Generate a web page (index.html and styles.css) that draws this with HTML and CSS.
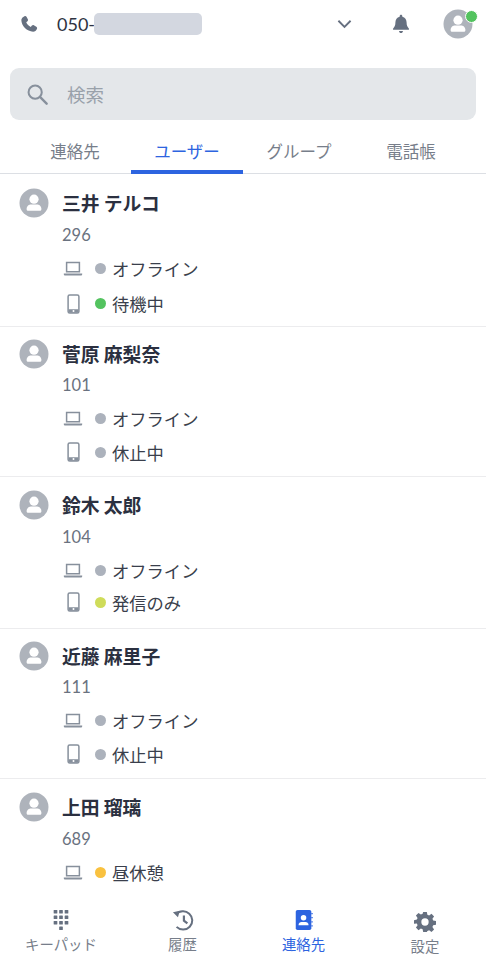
FILE: index.html
```html
<!DOCTYPE html>
<html lang="ja">
<head>
<meta charset="utf-8">
<title>連絡先</title>
<link rel="stylesheet" href="styles.css">
</head>
<body>
<svg class="defs" width="0" height="0" aria-hidden="true">
  <symbol id="avatar" viewBox="0 0 30 30">
    <circle cx="15" cy="15" r="14.5" fill="#aeb3bb"/>
    <circle cx="15" cy="11.2" r="4.6" fill="#fff"/>
    <path d="M7.6 21.2c0-3.2 2.6-4.6 4.4-4.6h6c1.8 0 4.4 1.4 4.4 4.6 0 1-.8 1.6-1.6 1.6H9.2c-.8 0-1.6-.6-1.6-1.6z" fill="#fff"/>
  </symbol>
  <symbol id="laptop" viewBox="0 0 20 16">
    <path d="M3.6 1.6h12.8v9.2H3.6z" fill="none" stroke="#87909c" stroke-width="1.5"/>
    <path d="M.8 12.4h18.4v.8c0 .9-.6 1.4-1.4 1.4H2.2c-.8 0-1.4-.5-1.4-1.4z" fill="#87909c"/>
  </symbol>
  <symbol id="phone" viewBox="0 0 13 20">
    <rect x="1.1" y="1" width="10.8" height="18" rx="1.6" fill="none" stroke="#87909c" stroke-width="1.5"/>
    <path d="M1.5 15.2h10V18a.8.8 0 0 1-.8.8H2.3a.8.8 0 0 1-.8-.8z" fill="#87909c"/>
    <circle cx="6.5" cy="16.9" r="1" fill="#fff"/>
  </symbol>
</svg>
<div class="app">
  <header class="topbar">
    <svg class="ic-call" viewBox="0 0 24 24"><path d="M6.6 2.6c.9-.5 1.9-.2 2.4.7l1.6 3c.4.8.3 1.7-.4 2.3L8.7 9.9c.9 2.2 3.1 4.6 5.4 5.6l1.4-1.6c.6-.6 1.5-.8 2.3-.4l3 1.7c.9.5 1.2 1.5.8 2.4-.9 2-2.5 3.6-4.7 3.6C9.600 21.200 2.800 14.100 2.800 7.300c0-2.100 1.800-3.800 3.800-4.700z" fill="#667080"/></svg>
    <span class="number">050-</span><span class="mask"></span>
    <svg class="ic-chev" viewBox="0 0 16 10"><path d="M1.500 1.500 8 8l6.500-6.500" fill="none" stroke="#667080" stroke-width="2"/></svg>
    <svg class="ic-bell" viewBox="0 0 20 22"><path d="M10 .6c.9 0 1.500.7 1.500 1.600v.7c3 .7 4.700 3.200 4.700 6.200 0 3.600 1 5.300 2.500 6.800.5.500.3 1.500-.6 1.500H1.900c-.9 0-1.100-1-.6-1.500 1.500-1.500 2.500-3.200 2.500-6.800 0-3 1.700-5.500 4.700-6.200v-.7C8.500 1.300 9.100.6 10 .6zM7.800 18.800h4.400c0 1.300-1 2.300-2.200 2.300s-2.200-1-2.200-2.300z" fill="#667080"/></svg>
    <div class="me">
      <svg class="avatar"><use href="#avatar"/></svg>
      <span class="me-dot"></span>
    </div>
  </header>
  <div class="search">
    <svg class="ic-search" viewBox="0 0 24 24"><circle cx="10" cy="10" r="7.200" fill="none" stroke="#87909c" stroke-width="2.200"/><path d="m15.500 15.500 7 7" stroke="#87909c" stroke-width="2.600" stroke-linecap="round"/></svg>
    <span class="search-text">検索</span>
  </div>
  <nav class="tabs">
    <span class="tab">連絡先</span>
    <span class="tab active">ユーザー</span>
    <span class="tab">グループ</span>
    <span class="tab">電話帳</span>
  </nav>
  <main class="list">
    <section class="row first">
      <div class="who"><svg class="avatar"><use href="#avatar"/></svg><span class="name">三井 テルコ</span></div>
      <div class="ext">296</div>
      <div class="stat"><svg class="laptop"><use href="#laptop"/></svg><i class="dot off"></i>オフライン</div>
      <div class="stat"><svg class="phone"><use href="#phone"/></svg><i class="dot ok"></i>待機中</div>
    </section>
    <section class="row short">
      <div class="who"><svg class="avatar"><use href="#avatar"/></svg><span class="name">菅原 麻梨奈</span></div>
      <div class="ext">101</div>
      <div class="stat"><svg class="laptop"><use href="#laptop"/></svg><i class="dot off"></i>オフライン</div>
      <div class="stat"><svg class="phone"><use href="#phone"/></svg><i class="dot off"></i>休止中</div>
    </section>
    <section class="row tight">
      <div class="who"><svg class="avatar"><use href="#avatar"/></svg><span class="name">鈴木 太郎</span></div>
      <div class="ext">104</div>
      <div class="stat"><svg class="laptop"><use href="#laptop"/></svg><i class="dot off"></i>オフライン</div>
      <div class="stat"><svg class="phone"><use href="#phone"/></svg><i class="dot out"></i>発信のみ</div>
    </section>
    <section class="row short">
      <div class="who"><svg class="avatar"><use href="#avatar"/></svg><span class="name">近藤 麻里子</span></div>
      <div class="ext">111</div>
      <div class="stat"><svg class="laptop"><use href="#laptop"/></svg><i class="dot off"></i>オフライン</div>
      <div class="stat"><svg class="phone"><use href="#phone"/></svg><i class="dot off"></i>休止中</div>
    </section>
    <section class="row">
      <div class="who"><svg class="avatar"><use href="#avatar"/></svg><span class="name">上田 瑠璃</span></div>
      <div class="ext">689</div>
      <div class="stat"><svg class="laptop"><use href="#laptop"/></svg><i class="dot away"></i>昼休憩</div>
    </section>
  </main>
  <footer class="bottom">
    <div class="nav-item">
      <svg class="nav-ic" viewBox="0 0 24 24"><g fill="#667080"><rect x="4" y="1" width="4" height="4" rx=".6"/><rect x="10" y="1" width="4" height="4" rx=".6"/><rect x="16" y="1" width="4" height="4" rx=".6"/><rect x="4" y="7" width="4" height="4" rx=".6"/><rect x="10" y="7" width="4" height="4" rx=".6"/><rect x="16" y="7" width="4" height="4" rx=".6"/><rect x="4" y="13" width="4" height="4" rx=".6"/><rect x="10" y="13" width="4" height="4" rx=".6"/><rect x="16" y="13" width="4" height="4" rx=".6"/><rect x="10" y="19" width="4" height="4" rx=".6"/></g></svg>
      <span>キーパッド</span>
    </div>
    <div class="nav-item">
      <svg class="nav-ic" viewBox="0 0 24 24"><path d="M4.500 6A10 10 0 1 1 5 19.500" fill="none" stroke="#667080" stroke-width="2.200"/><path d="M1 3.500 8.500 2 6.500 9z" fill="#667080"/><path d="M13 7v5.800l3.800 3" fill="none" stroke="#667080" stroke-width="2.400"/></svg>
      <span>履歴</span>
    </div>
    <div class="nav-item current">
      <svg class="nav-ic" viewBox="0 0 24 24"><path d="M5 1h13a2 2 0 0 1 2 2v18a2 2 0 0 1-2 2H5a2 2 0 0 1-2-2V3a2 2 0 0 1 2-2z" fill="#2d64e0"/><path d="M20 5h1.500M20 9.500h1.500M20 14h1.500M20 18.500h1.500" stroke="#2d64e0" stroke-width="1.400"/><circle cx="11.500" cy="9.500" r="3" fill="#fff"/><path d="M6 17.600c0-2.400 1.800-3.400 3.200-3.400h4.600c1.400 0 3.200 1 3.200 3.400z" fill="#fff"/></svg>
      <span>連絡先</span>
    </div>
    <div class="nav-item low">
      <svg class="nav-ic" viewBox="0 0 24 24"><path fill-rule="evenodd" d="M10 1h4l.6 3.100 1.900.8 2.600-1.800 2.800 2.800-1.800 2.600.8 1.900 3.100.6v4l-3.100.6-.8 1.900 1.800 2.600-2.800 2.800-2.600-1.800-1.900.8L14 23h-4l-.6-3.100-1.900-.8-2.600 1.800-2.800-2.800 1.800-2.600-.8-1.900L0 14v-4l3.100-.6.8-1.900-1.800-2.600 2.800-2.800 2.600 1.800 1.900-.8zM12 8a4 4 0 1 0 0 8 4 4 0 0 0 0-8z" fill="#667080"/></svg>
      <span>設定</span>
    </div>
  </footer>
</div>
</body>
</html>
```

FILE: styles.css
```css
* { box-sizing: border-box; }
html, body { margin: 0; padding: 0; height: 964px; background: #fff; overflow: hidden; }
body { font-family: "Noto Sans CJK JP", "Noto Sans", sans-serif; color: #2e3342; }
.defs { position: absolute; }
.app { display: flex; flex-direction: column; height: 964px; }

.topbar { display: flex; align-items: center; height: 48px; flex: none; padding-left: 19px; }
.ic-call { width: 20px; height: 20px; flex: none; }
.number { font-family: Lato, sans-serif; font-size: 18px; margin-left: 18px; }
.mask { width: 108px; height: 22px; margin-left: -1px; border-radius: 5px; background: #d3d7e0; }
.ic-chev { width: 15px; height: 10px; margin-left: 135px; flex: none; }
.ic-bell { width: 18px; height: 20px; margin-left: 40px; flex: none; }
.me { position: relative; width: 30px; height: 30px; margin-left: 33px; flex: none; }
.me-dot { position: absolute; top: 0.5px; right: -4.5px; width: 13px; height: 13px; border-radius: 50%; background: #53c35f; border: 1.500px solid #fff; }

.search { display: flex; align-items: center; height: 52px; margin: 20px 10px 0; background: #e4e7ea; border-radius: 9px; padding: 0 0 1px 16px; flex: none; }
.ic-search { width: 22px; height: 22px; flex: none; }
.search-text { font-size: 18.5px; color: #99a1aa; margin-left: 19px; }

.tabs { display: grid; grid-template-columns: repeat(4, 112px); padding-left: 19px; height: 54px; flex: none; border-bottom: 1px solid #dcdfe4; }
.tab { display: flex; align-items: center; justify-content: center; font-size: 16.5px; color: #777e8a; height: 54px; padding-top: 7px; }
.tab.active { color: #2d64e0; border-bottom: 4px solid #2d64e0; padding-top: 11px; }

.list { flex: 1; overflow: hidden; min-height: 0; }
.row { height: 152px; border-bottom: 1px solid #ececee; padding: 13px 0 0 19px; }
.row.first { height: 153px; padding-top: 14px; }
.row.short { height: 150px; padding-top: 12px; }
.who { display: flex; align-items: center; height: 30px; }
.avatar { width: 30px; height: 30px; display: block; flex: none; }
.name { font-size: 18.8px; font-weight: 700; margin-left: 13px; line-height: 30px; color: #2b3040; }
.ext { font-family: Lato, sans-serif; font-size: 16.5px; color: #6a7280; margin: 5px 0 0 43px; line-height: 24px; height: 24px; }
.short .ext { margin-top: 4px; }
.stat { display: flex; align-items: center; height: 35px; padding-left: 45px; font-size: 17.3px; color: #3a3f4c; }
.ext + .stat { margin-top: 4px; }
.short .stat + .stat { height: 32px; }
.tight .stat + .stat { height: 28px; }
.laptop { width: 20px; height: 16px; flex: none; margin-left: -1px; }
.phone { width: 13px; height: 20px; flex: none; margin: 0 3px; }
.dot { width: 11px; height: 11px; border-radius: 50%; margin: 0 6px 0 12px; flex: none; }
.dot.off { background: #acb2bc; }
.dot.ok { background: #53c35f; }
.dot.out { background: #cfdc5a; }
.dot.away { background: #f9c13f; }

.bottom { display: grid; grid-template-columns: 122px 121px 121px 122px; height: 76px; flex: none; background: #fff; }
.nav-item { display: flex; flex-direction: column; align-items: center; padding-top: 21px; font-size: 14.4px; line-height: 20px; color: #777e8a; }
.nav-ic { width: 22px; height: 22px; flex: none; margin-bottom: 3px; }
.nav-item.current { color: #2d64e0; }
.nav-item.low { padding-top: 23px; }
```
